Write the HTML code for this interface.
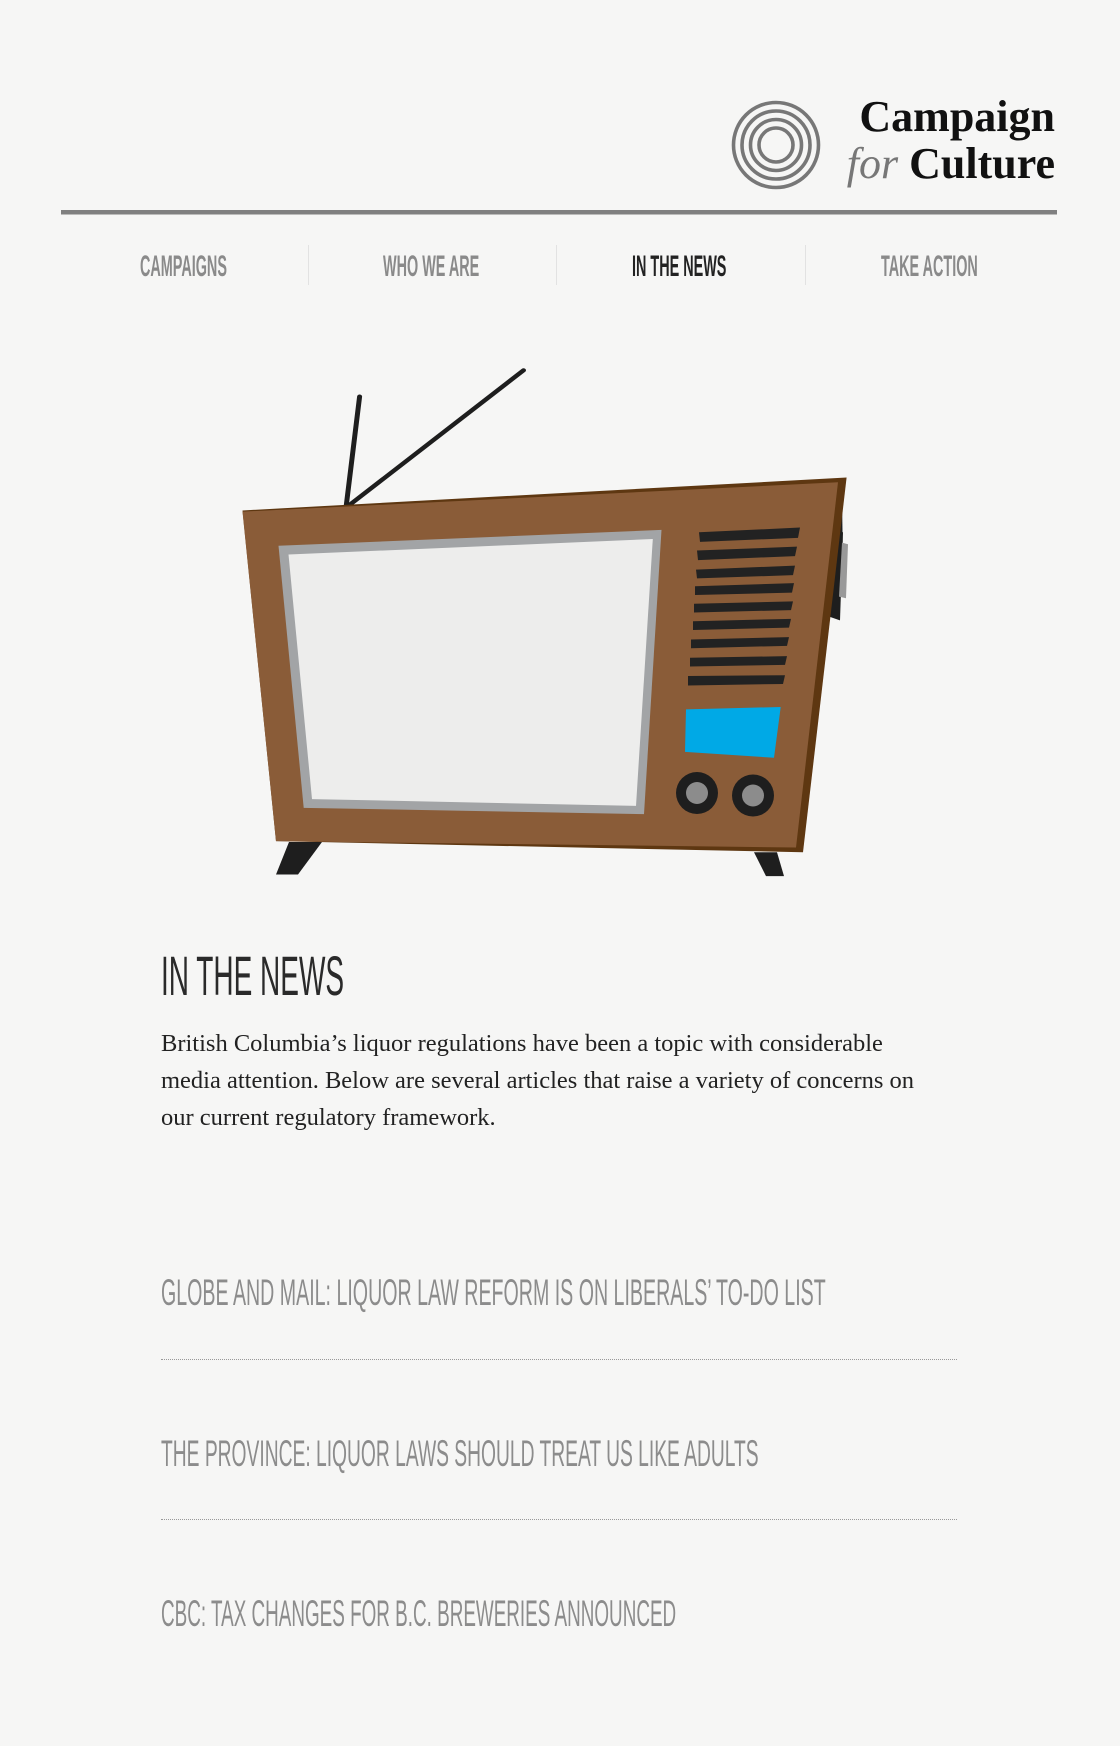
<!DOCTYPE html>
<html><head><meta charset="utf-8">
<style>
html,body{margin:0;padding:0}
body{width:1120px;height:1746px;background:#f6f6f5;position:relative;overflow:hidden;font-family:"Liberation Sans",sans-serif}
.abs{position:absolute}
.cond{display:inline-block;transform-origin:0 0;white-space:nowrap;font-weight:bold}
.nav{position:absolute;top:252px;font-size:30px;color:#8a8a8a;line-height:30px}
.link{position:absolute;left:161px;font-size:37px;color:#8c8c8c;line-height:37px}
.dot{position:absolute;left:161px;width:796px;border-top:1px dotted #999}
</style></head><body>
<svg class="abs" style="left:0;top:0" width="1120" height="1746">
  <g fill="none" stroke="#777" stroke-width="3.6">
    <circle cx="776" cy="145" r="42.5"/>
    <circle cx="776" cy="145" r="34"/>
    <circle cx="776" cy="145" r="25.5"/>
    <circle cx="776" cy="145" r="17"/>
  </g>
  <rect x="61" y="210" width="996" height="4.5" fill="#808080"/>
  <g fill="#e2e2e2"><rect x="308" y="245" width="1" height="40"/><rect x="556" y="245" width="1" height="40"/><rect x="805" y="245" width="1" height="40"/></g>
  <g transform="matrix(1,0,0,0.794,0,74.16)">
  <g stroke="#1e1e1e" stroke-width="5" stroke-linecap="round">
    <line x1="346" y1="546" x2="359.6" y2="406"/>
    <line x1="346" y1="546" x2="523.5" y2="373"/>
  </g>
  <polygon points="289,967 322,967 298,1008 276,1008" fill="#1e1e1e"/>
  <polygon points="754,980 777,980 784,1010 766,1010" fill="#1e1e1e"/>
  <polygon points="827,530 842,532 843,620 837,620" fill="#1e1e1e"/>
  <polygon points="827,575 843,577 840,688 822,680" fill="#1e1e1e"/>
  <polygon points="842,590 848,592 846,660 839,658" fill="#999"/>
  <polygon points="242.5,549.5 846.6,508 803,980 276,966" fill="#5e3711"/>
  <polygon points="242.5,551 838,514 796,974 276,966" fill="#8a5c38"/>
  <polygon points="278.5,594 661.5,574 644,932 303.7,924" fill="#a2a4a6"/>
  <polygon points="288.5,605 652.8,585.5 636,921.6 312,913" fill="#ededec"/>
  <g fill="#222">
    <polygon points="699,577 800,571 798,584 700,589"/>
    <polygon points="697,600 797,595 795,607 698,612"/>
    <polygon points="696,624 795,619 793,631 697,635"/>
    <polygon points="695,645 794,641 792,653 695,656"/>
    <polygon points="694,667 793,664 791,675 694,678"/>
    <polygon points="693,689 791,686 789,697 693,700"/>
    <polygon points="691,712 789,709 787,720 691,723"/>
    <polygon points="690,735 787,733 785,744 690,746"/>
    <polygon points="688,758 785,757 783,768 688,770"/>
  </g>
  <polygon points="686,800 780.7,797 774,861 685,853.5" fill="#00a9e6"/>
  </g>
  <g fill="#1e1e1e"><circle cx="697" cy="793" r="21"/><circle cx="753" cy="795.5" r="21"/></g>
  <g fill="#8c8c8c"><circle cx="697" cy="793" r="11"/><circle cx="753" cy="795.5" r="11"/></g>
</svg>

<div class="abs" style="right:65px;top:93px;text-align:right;font-family:'Liberation Serif',serif;font-size:44px;line-height:47px;color:#111;font-weight:bold">
Campaign<br><span style="font-style:italic;color:#777;font-weight:normal">for</span> Culture</div>

<div class="nav" style="left:140px"><span class="cond" style="transform:scaleX(0.48)">CAMPAIGNS</span></div>
<div class="nav" style="left:383px"><span class="cond" style="transform:scaleX(0.48)">WHO WE ARE</span></div>
<div class="nav" style="left:632px;color:#222"><span class="cond" style="transform:scaleX(0.48)">IN THE NEWS</span></div>
<div class="nav" style="left:881px"><span class="cond" style="transform:scaleX(0.48)">TAKE ACTION</span></div>

<div class="abs" style="left:161px;top:948px;font-size:56px;line-height:56px;color:#2a2a2a"><span class="cond" style="transform:scaleX(0.5);font-weight:normal">IN THE NEWS</span></div>

<div class="abs" style="left:161px;top:1025px;width:775px;font-family:'Liberation Serif',serif;font-size:24.5px;line-height:37px;color:#222">
British Columbia’s liquor regulations have been a topic with considerable media attention. Below are several articles that raise a variety of concerns on our current regulatory framework.</div>

<div class="link" style="top:1274px"><span class="cond" style="transform:scaleX(0.53);font-weight:normal">GLOBE AND MAIL: LIQUOR LAW REFORM IS ON LIBERALS’ TO-DO LIST</span></div>
<div class="dot" style="top:1359px"></div>
<div class="link" style="top:1435px"><span class="cond" style="transform:scaleX(0.52);font-weight:normal">THE PROVINCE: LIQUOR LAWS SHOULD TREAT US LIKE ADULTS</span></div>
<div class="dot" style="top:1519px"></div>
<div class="link" style="top:1595px"><span class="cond" style="transform:scaleX(0.51);font-weight:normal">CBC: TAX CHANGES FOR B.C. BREWERIES ANNOUNCED</span></div>
</body></html>
